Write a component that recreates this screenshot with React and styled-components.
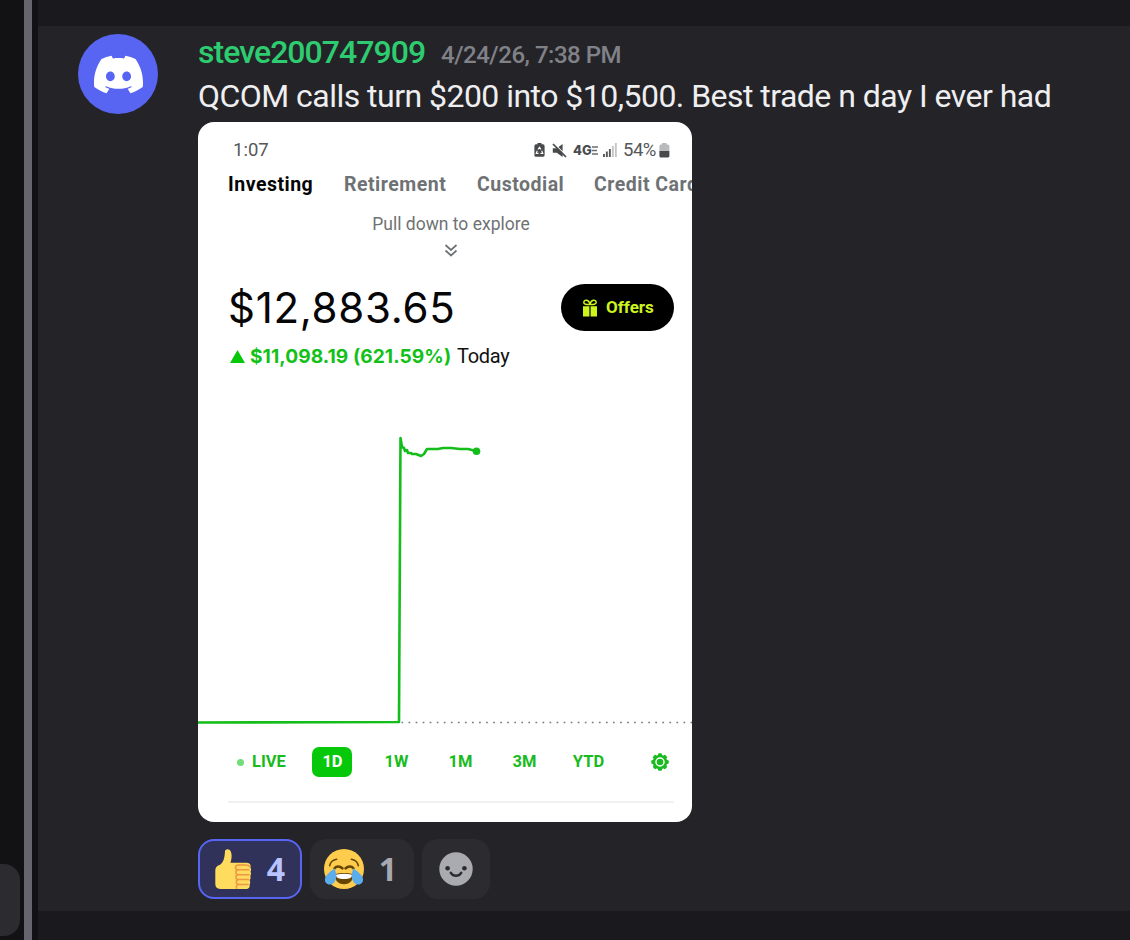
import React, { useState } from "react";
import styled, { createGlobalStyle } from "styled-components";
import { SiDiscord } from "react-icons/si";

const GlobalStyle = createGlobalStyle`
  * {
    box-sizing: border-box;
  }

  body {
    margin: 0;
    background: #1a1a1e;
    overflow: hidden;
  }
`;

const chatFont = `Roboto, "Liberation Sans", sans-serif`;
const countFont = `"Noto Sans", "Open Sans", sans-serif`;
const phoneFont = `Roboto, "Liberation Sans", sans-serif`;
const numberFont = `Inter, "Liberation Sans", sans-serif`;

// page frame
const Page = styled.div`
  display: flex;
  width: 1130px;
  height: 940px;
  overflow: hidden;
  background: #121214;
  font-family: ${chatFont};
`;

const Rail = styled.div`
  width: 24px;
  display: flex;
  flex-direction: column;
  justify-content: flex-end;
  padding-bottom: 4px;
`;

const RailItem = styled.div`
  width: 20px;
  height: 72px;
  border-radius: 0 16px 16px 0;
  background: #2c2c30;
`;

const Scrollbar = styled.div`
  width: 8px;
  margin-right: 6px;
  background: #65646f;
`;

const Channel = styled.main`
  flex: 1;
  padding: 26px 0 29px;
  background: #1a1a1e;
`;

// message
const Message = styled.article`
  display: flex;
  height: 885px;
  padding: 8px 0 0 40px;
  background: #242428;
`;

const Avatar = styled.div`
  display: flex;
  align-items: center;
  justify-content: center;
  width: 80px;
  height: 80px;
  margin-right: 40px;
  border-radius: 50%;
  background: #5865f2;
  color: #fff;
`;

const Body = styled.div`
  flex: 1;
`;

const Header = styled.div`
  display: flex;
  align-items: baseline;
  height: 40px;
  line-height: 36px;
  white-space: nowrap;
`;

const Author = styled.span`
  width: 243px;
  color: #2ecc71;
  font-size: 32px;
  font-weight: 500;
  letter-spacing: -0.95px;
`;

const Timestamp = styled.time`
  color: #818188;
  font-size: 24px;
  font-weight: 500;
  letter-spacing: -0.48px;
`;

const Content = styled.p`
  height: 48px;
  margin: 0;
  color: #efeff1;
  font-size: 32px;
  line-height: 44px;
  letter-spacing: -0.53px;
  white-space: nowrap;
`;

// attachment
const Attachment = styled.section`
  display: flex;
  flex-direction: column;
  width: 494px;
  height: 700px;
  overflow: hidden;
  border-radius: 16px;
  background: #fff;
  font-family: ${phoneFont};
`;

const StatusBar = styled.div`
  display: flex;
  align-items: center;
  justify-content: space-between;
  height: 28px;
  margin: 14px 22px 0 35px;
  color: #555759;
  font-size: 18.5px;
`;

const StatusIcons = styled.div`
  display: flex;
  align-items: center;
`;

const NetworkLabel = styled.span`
  display: flex;
  align-items: center;
  width: 26px;
  margin: 0 4px 0 6px;
  color: #4b4d4f;
  font-family: ${numberFont};
  font-size: 13px;
  font-weight: 800;
  letter-spacing: 0;
`;

const BatteryLevel = styled.span`
  width: 36px;
  margin-left: 6px;
  letter-spacing: -0.5px;
`;

const Tabs = styled.nav`
  display: flex;
  height: 40px;
  padding-left: 30px;
  white-space: nowrap;
`;

const Tab = styled.span`
  flex: none;
  width: ${(props) => props.$width}px;
  color: ${(props) => (props.$active ? "#050505" : "#6f7274")};
  font-size: 19.5px;
  font-weight: 700;
  line-height: 42px;
  letter-spacing: 0.5px;
`;

const Explore = styled.div`
  display: flex;
  flex-direction: column;
  align-items: center;
  height: 72px;
  padding: 8px 0 0 12px;
  color: #6f7274;
  font-size: 17.5px;
  line-height: 24px;

  & > svg {
    margin-top: 8px;
  }
`;

const Portfolio = styled.div`
  display: flex;
  justify-content: space-between;
  height: 60px;
  padding: 0 18px 0 30px;
`;

const Balance = styled.div`
  color: #060606;
  font-family: ${numberFont};
  font-size: 42px;
  line-height: 63px;
  letter-spacing: 0.7px;
`;

const OffersButton = styled.button`
  display: flex;
  align-items: center;
  gap: 8px;
  width: 113px;
  height: 47px;
  margin-top: 8px;
  padding: 0 0 0 21px;
  border: none;
  border-radius: 24px;
  background: #000;
  color: #cdf51d;
  font-family: ${phoneFont};
  font-size: 17px;
  font-weight: 700;
  line-height: 18px;

  & > span {
    padding-bottom: 2px;
  }
`;

const Change = styled.div`
  display: flex;
  align-items: center;
  height: 40px;
  padding-left: 32px;
  white-space: nowrap;
`;

const ChangeAmount = styled.span`
  width: 212px;
  padding-left: 5px;
  color: #12c118;
  font-family: ${numberFont};
  font-size: 19.2px;
  font-weight: 700;
  letter-spacing: 0.05px;
`;

const ChangePeriod = styled.span`
  color: #111;
  font-size: 20px;
  letter-spacing: -0.3px;
`;

const Chart = styled.svg`
  display: block;
  flex: none;
  width: 494px;
  height: 364px;
`;

const Ranges = styled.div`
  display: flex;
  align-items: center;
  height: 40px;
  margin: 2px 0 19px 36px;
`;

const Range = styled.button`
  width: ${(props) => props.$width || 40}px;
  height: 30px;
  margin: 0 24px 0 0;
  padding: 0;
  border: none;
  border-radius: 7px;
  background: ${(props) => (props.$active ? "#06c80b" : "transparent")};
  color: ${(props) => (props.$active ? "#fff" : "#19bb1e")};
  font-family: ${phoneFont};
  font-size: 16.5px;
  font-weight: 700;
  line-height: 28px;
  text-indent: 1px;
  white-space: nowrap;
`;

const LiveDot = styled.i`
  display: inline-block;
  width: 7px;
  height: 7px;
  margin-right: 8px;
  border-radius: 50%;
  background: #73dd78;
  vertical-align: 1px;
`;

const Settings = styled.span`
  display: flex;
  margin-left: 18px;
`;

const Divider = styled.div`
  height: 2px;
  margin: 0 18px 0 30px;
  background: #eff1f2;
`;

// reactions
const Reactions = styled.div`
  display: flex;
  gap: 8px;
  padding-top: 17px;
`;

const Reaction = styled.button`
  display: flex;
  align-items: center;
  justify-content: ${(props) => (props.$iconOnly ? "center" : "space-between")};
  width: ${(props) => (props.$iconOnly ? 68 : 104)}px;
  height: 60px;
  padding: ${(props) => (props.$iconOnly ? "0" : "0 15px 0 12px")};
  border: 2px solid ${(props) => (props.$active ? "#5865f2" : "#2c2c30")};
  border-radius: 16px;
  background: ${(props) => (props.$active ? "#30325a" : "#2c2c30")};
  color: ${(props) => (props.$active ? "#b8c3ff" : "#a8a9b0")};
  font-family: ${countFont};
  font-size: 32px;
  font-weight: 700;
  line-height: 1;
`;

const MuteSvg = styled.svg`
  margin-left: 7px;
`;

const BatterySaverIcon = () => (
  <svg width="11" height="14" viewBox="0 0 11 14">
    <path d="M3.5 0h4v1.3H9a1.6 1.6 0 0 1 1.6 1.6v9.3A1.6 1.6 0 0 1 9 13.8H2A1.6 1.6 0 0 1 .4 12.2V2.900A1.600 1.600 0 0 1 2 1.300h1.500z" fill="#47494b" />
    <path d="M4 6.500 5.500 4.200 7 6.500M7.700 7.800l1.100 2.600H6.500M4.600 10.400H2.200l1.100-2.600" fill="none" stroke="#fff" strokeWidth="1.100" />
  </svg>
);

const MuteIcon = () => (
  <MuteSvg width="15" height="15" viewBox="0 0 15 15">
    <path d="M.8 5.200h4L10.600.900v13.200L4.800 9.800h-4z" fill="#47494b" />
    <path d="M2.500.800 15 13.300" stroke="#fff" strokeWidth="1.200" />
    <path d="M1 1 14 14" stroke="#47494b" strokeWidth="1.700" />
  </MuteSvg>
);

const LteMark = () => (
  <svg width="6" height="9" viewBox="0 0 6 9">
    <path d="M0 1h6M0 4.500h5M0 8h6" stroke="#6a6c6e" strokeWidth="1.500" />
  </svg>
);

const SignalIcon = () => (
  <svg width="14" height="14" viewBox="0 0 14 14">
    <path d="M0 11h1.900v3H0zM2.900 8.500h1.900V14H2.900zM5.900 6h1.900v8H5.900z" fill="#55585a" />
    <path d="M8.900 3h1.900v11H8.900zM11.900 0h1.900v14h-1.900z" fill="#c4c5c6" />
  </svg>
);

const BatteryIcon = () => (
  <svg width="11" height="15" viewBox="0 0 11 15">
    <path d="M3 0h4.500v1.600H9A1.500 1.500 0 0 1 10.400 3v5H.400V3a1.500 1.500 0 0 1 1.500-1.400H3z" fill="#b9babb" />
    <path d="M.400 8h10v5A1.500 1.500 0 0 1 9 14.500H1.900A1.500 1.500 0 0 1 .400 13z" fill="#47494b" />
  </svg>
);

const GiftIcon = () => (
  <svg width="16" height="18" viewBox="0 0 16 18">
    <path d="M1 7.200h6.400V17.600H1zM8.600 7.200H15v10.400H8.600z" fill="#cdf51d" />
    <path d="M8 5.400C4.500 5.800 1.600 5.200 1.800 3.200 2.100.300 7 .300 8 5.400 9 .300 13.900.300 14.200 3.200 14.400 5.200 11.500 5.800 8 5.400z" fill="none" stroke="#cdf51d" strokeWidth="1.500" />
  </svg>
);

const GearIcon = () => (
  <svg width="20" height="20" viewBox="0 0 20 20">
    <g fill="#19bb1e">
      <circle cx="10" cy="10" r="7.300" />
      {[0, 45, 90, 135, 180, 225, 270, 315].map((angle) => (
        <rect key={angle} x="8" y="1.300" width="4" height="4" rx="1.200" transform={`rotate(${angle} 10 10)`} />
      ))}
    </g>
    <circle cx="10" cy="10" r="4" fill="none" stroke="#fff" strokeWidth="1.500" />
  </svg>
);

const ThumbEmoji = () => (
  <svg width="40" height="40" viewBox="0 0 40 40">
    <path
      d="M13 2.300C13.300-.500 17.400-.600 18.800 2.600c1.500 3.500.700 7.600-.400 11.200H34.500c3.400 0 4.700 2.200 3.900 4.700.9 1.200.9 3 .1 4.300.800 1.400.6 3.100-.3 4.300.7 1.400.4 3.100-.5 4.200.8 1.300.6 3-.1 4.200.5 2.600-.8 4.500-3.100 4.500H8.300C4.800 39.800 3.300 38.200 3.300 35V21.500c0-3 1.500-4.800 4.200-5.500 3.700-1.900 5-5.900 5.500-13.700z"
      fill="#ffdb5e"
    />
    <path
      d="M37.800 17.600c-1-1.300-2.300-1.700-4.300-1.700h-6.900c-4.200 0-4.200 4.900 0 4.900H37M26.600 20.800c-3.800.2-3.600 4.900 0 4.900H37M26.600 25.700c-3.700.2-3.500 4.900.2 4.900h9.800M27 30.600c-3.700.2-3.500 4.900 0 4.900h9M27 35.500c-2.300.2-3 1.800-2.400 3.700"
      fill="none"
      stroke="#ee9547"
      strokeWidth="1.500"
      strokeLinecap="round"
    />
  </svg>
);

const JoyEmoji = () => (
  <svg width="40" height="40" viewBox="0 0 40 40">
    <circle cx="20" cy="20" r="20" fill="#ffcc4d" />
    <g fill="none" stroke="#664500" strokeLinecap="round">
      <path d="M5.600 16.700C6.500 13 9 10.700 12.700 10.200M34.400 16.700C33.500 13 31 10.700 27.300 10.200" strokeWidth="1.500" />
      <path d="M10.600 19.300c1.800-2.500 5.200-2.500 7.800 0M21.600 19.300c2.600-2.500 6-2.500 7.800 0" strokeWidth="2.600" />
    </g>
    <path d="M10.800 25c5.500-1.500 12.900-1.500 18.400 0 .5 5.700-3 10.200-9.200 10.200S10.300 30.700 10.800 25z" fill="#664500" />
    <path d="M12 25.700c5-1.300 11-1.300 16 0 .1 3.100-2.600 4.300-8 4.300s-8.100-1.200-8-4.300z" fill="#fff" />
    <path d="M10.400 19.300c2.300 4.500 2.500 9.200.7 12.700-1.600 3.300-5 4.400-7.600 3C.400 33.300.200 29.600 2.500 26.500c1.800-2.400 4.500-4.600 7.900-7.200z" fill="#5dadec" />
    <path d="M29.600 19.300c-2.300 4.500-2.500 9.200-.7 12.700 1.600 3.300 5 4.400 7.600 3 3.100-1.700 3.300-5.400 1-8.500-1.800-2.400-4.500-4.600-7.900-7.200z" fill="#5dadec" />
  </svg>
);

const SmileIcon = () => (
  <svg width="34" height="34" viewBox="0 0 34 34">
    <circle cx="17" cy="17" r="16.700" fill="#aaaab1" />
    <circle cx="8.600" cy="16.300" r="2.300" fill="#2c2c30" />
    <circle cx="25.400" cy="16.300" r="2.300" fill="#2c2c30" />
    <path d="M11.800 20.800c2.500 4 7.900 4 10.400 0" fill="none" stroke="#2c2c30" strokeWidth="2.500" strokeLinecap="round" />
  </svg>
);

const ranges = ["1D", "1W", "1M", "3M", "YTD"];

const App = () => {
  const [range, setRange] = useState("1D");

  return (
    <Page>
      <GlobalStyle />
      <Rail>
        <RailItem />
      </Rail>
      <Scrollbar />
      <Channel>
        <Message>
          <Avatar>
            <SiDiscord size={49} />
          </Avatar>
          <Body>
            <Header>
              <Author>steve200747909</Author>
              <Timestamp>4/24/26, 7:38 PM</Timestamp>
            </Header>
            <Content>QCOM calls turn $200 into $10,500. Best trade n day I ever had</Content>

            <Attachment>
              <StatusBar>
                <span>1:07</span>
                <StatusIcons>
                  <BatterySaverIcon />
                  <MuteIcon />
                  <NetworkLabel>
                    4G
                    <LteMark />
                  </NetworkLabel>
                  <SignalIcon />
                  <BatteryLevel>54%</BatteryLevel>
                  <BatteryIcon />
                </StatusIcons>
              </StatusBar>
              <Tabs>
                <Tab $active $width={116}>Investing</Tab>
                <Tab $width={133}>Retirement</Tab>
                <Tab $width={117}>Custodial</Tab>
                <Tab $width={120}>Credit Card</Tab>
              </Tabs>
              <Explore>
                Pull down to explore
                <svg width="14" height="13" viewBox="0 0 14 13" fill="none" stroke="#6f7274" strokeWidth="1.700">
                  <path d="M1.500 1 7 6l5.500-5M1.500 6.500l5.500 5 5.500-5" />
                </svg>
              </Explore>
              <Portfolio>
                <Balance>$12,883.65</Balance>
                <OffersButton>
                  <GiftIcon />
                  <span>Offers</span>
                </OffersButton>
              </Portfolio>
              <Change>
                <svg width="15" height="13" viewBox="0 0 15 13">
                  <path d="M7.500 0 15 13H0z" fill="#06c80b" />
                </svg>
                <ChangeAmount>$11,098.19 (621.59%)</ChangeAmount>
                <ChangePeriod>Today</ChangePeriod>
              </Change>

              {/* intraday line, dotted previous close */}
              <Chart viewBox="0 0 494 364">
                <path d="M203.500 346.500H494" stroke="#77797b" strokeWidth="1.700" strokeDasharray="1.700 5.350" />
                <path
                  d="M0 346.500 201 346 202.500 62 204 71 206 72 207 75 209 74 210 77 213 77 214 78 218 78 223 80 226 78 229 73 240 73 245 72 253 72 262 73 270 73 278 75"
                  fill="none"
                  stroke="#15bd1b"
                  strokeWidth="2.600"
                  strokeLinejoin="round"
                />
                <circle cx="278.500" cy="75.300" r="3.800" fill="#15bd1b" />
              </Chart>

              <Ranges>
                <Range $width={54}>
                  <LiveDot />
                  LIVE
                </Range>
                {ranges.map((item) => (
                  <Range key={item} $active={item === range} onClick={() => setRange(item)}>
                    {item}
                  </Range>
                ))}
                <Settings>
                  <GearIcon />
                </Settings>
              </Ranges>
              <Divider />
            </Attachment>

            <Reactions>
              <Reaction $active>
                <ThumbEmoji />
                4
              </Reaction>
              <Reaction>
                <JoyEmoji />
                1
              </Reaction>
              <Reaction $iconOnly>
                <SmileIcon />
              </Reaction>
            </Reactions>
          </Body>
        </Message>
      </Channel>
    </Page>
  );
};

export default App;
